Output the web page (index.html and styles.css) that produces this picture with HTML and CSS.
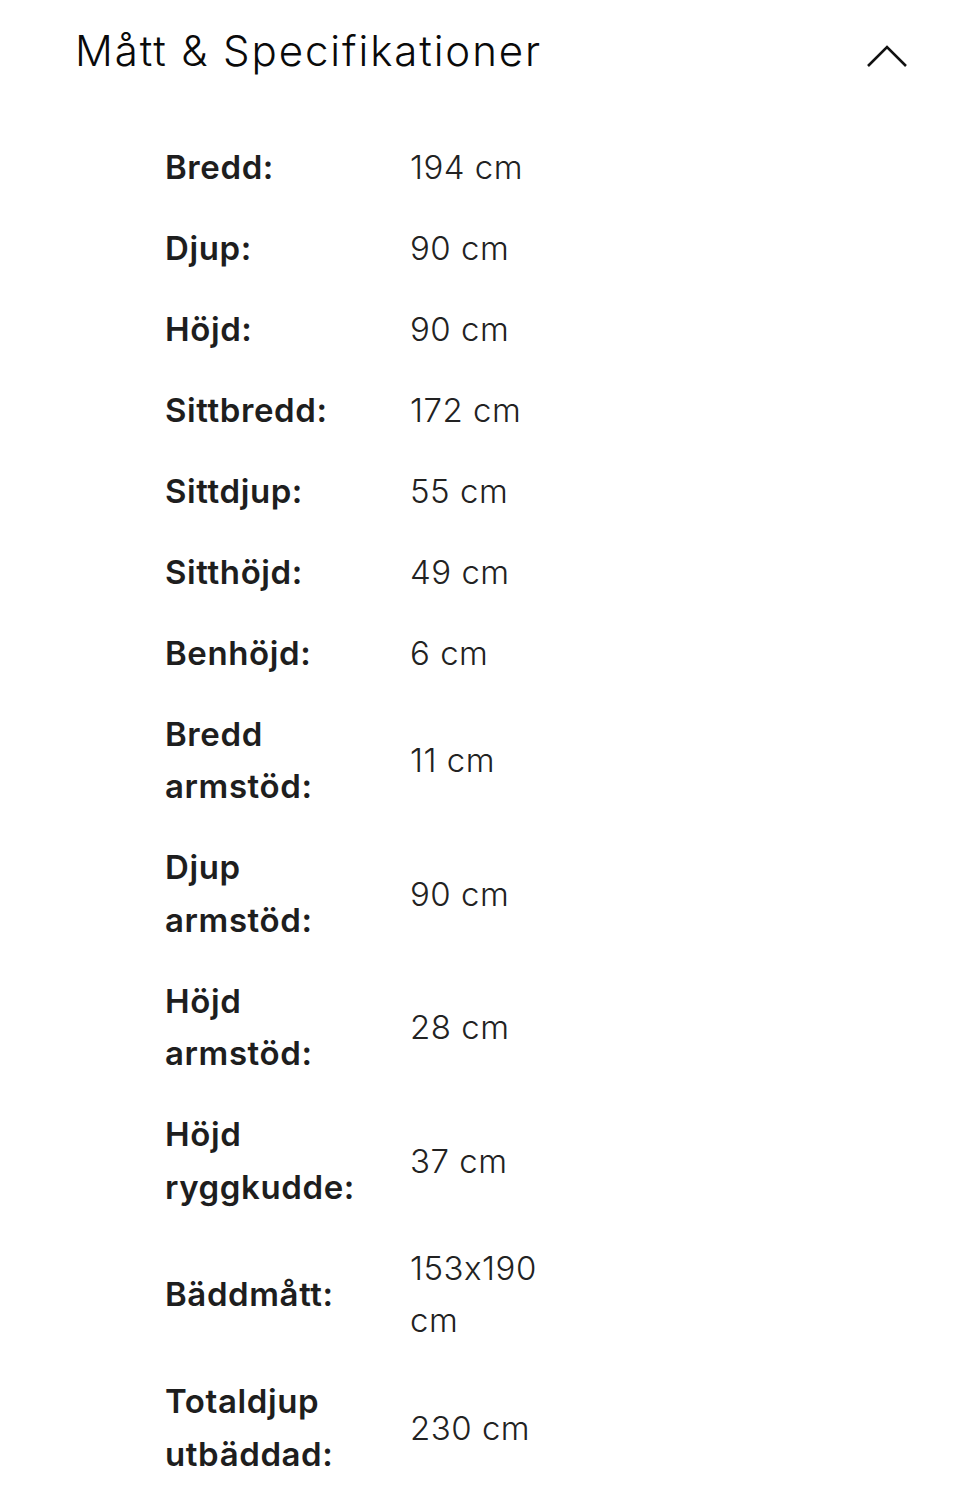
FILE: index.html
```html
<!DOCTYPE html>
<html lang="sv">
<head>
<meta charset="utf-8">
<title>Mått &amp; Specifikationer</title>
<link rel="stylesheet" href="styles.css">
</head>
<body>
<section class="spec-section">
  <header class="spec-header">
    <h2 class="spec-title">Mått &amp; Specifikationer</h2>
    <svg class="chevron" width="42" height="26" viewBox="0 0 42 26" aria-hidden="true">
      <polyline points="2,23 21,4 40,23" fill="none" stroke="#111" stroke-width="2.6" stroke-linejoin="miter"/>
    </svg>
  </header>
  <dl class="spec-list">
    <dt>Bredd:</dt><dd>194 cm</dd>
    <dt>Djup:</dt><dd>90 cm</dd>
    <dt>Höjd:</dt><dd>90 cm</dd>
    <dt>Sittbredd:</dt><dd>172 cm</dd>
    <dt>Sittdjup:</dt><dd>55 cm</dd>
    <dt>Sitthöjd:</dt><dd>49 cm</dd>
    <dt>Benhöjd:</dt><dd>6 cm</dd>
    <dt>Bredd armstöd:</dt><dd>11 cm</dd>
    <dt>Djup armstöd:</dt><dd>90 cm</dd>
    <dt>Höjd armstöd:</dt><dd>28 cm</dd>
    <dt>Höjd ryggkudde:</dt><dd>37 cm</dd>
    <dt>Bäddmått:</dt><dd>153x190 cm</dd>
    <dt>Totaldjup utbäddad:</dt><dd>230 cm</dd>
  </dl>
</section>
</body>
</html>
```
FILE: styles.css
```css
html, body {
  margin: 0;
  padding: 0;
  background: #ffffff;
}

body {
  font-family: "Inter", "Open Sans", "DejaVu Sans", sans-serif;
  font-feature-settings: "calt" 0;
  color: #1d1d1d;
}

.spec-section {
  padding: 0 52px 0 75px;
}

.spec-header {
  height: 100px;
  display: flex;
  align-items: center;
  justify-content: space-between;
}

.spec-title {
  margin: 0;
  font-size: 42px;
  font-weight: 300;
  color: #0a0a0a;
  letter-spacing: 1.9px;
}

.chevron {
  display: block;
  margin-top: 12px;
}

.spec-list {
  margin: 40.75px 0 0 90px;
  display: grid;
  grid-template-columns: 245px 140px;
  row-gap: 28.5px;
  align-items: center;
}

.spec-list dt,
.spec-list dd {
  margin: 0;
  font-size: 33px;
  line-height: 52.5px;
}

.spec-list dt {
  font-weight: 600;
  padding-right: 25px;
  letter-spacing: 0.6px;
  color: #1e1e1e;
}

.spec-list dd {
  font-weight: 300;
  letter-spacing: 0.5px;
  color: #222222;
}
```
